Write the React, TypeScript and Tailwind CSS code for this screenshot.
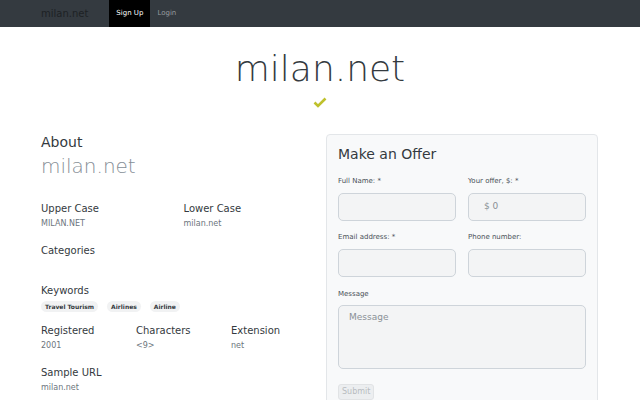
import React from "react";

const font = { fontFamily: '"DejaVu Sans", "Noto Sans", sans-serif' };

function Field({ label, placeholder }: { label: string; placeholder?: string }) {
  return (
    <div>
      <label className="mb-[7px] block text-[7px] leading-[10px] text-[#495057]">{label}</label>
      <div className="flex h-[28px] items-center rounded-[5px] border border-[#ced4da] bg-[#f3f4f5] px-[15px] text-[9px] text-[#8a9096]">
        {placeholder}
      </div>
    </div>
  );
}

function Fact({ title, value }: { title: string; value: string }) {
  return (
    <div>
      <h5 className="text-[10px] leading-[14px] text-[#343a40]">{title}</h5>
      <p className="mt-[3px] text-[8px] leading-[10px] text-[#6c757d]">{value}</p>
    </div>
  );
}

export default function App() {
  return (
    <div className="h-[400px] overflow-hidden bg-white" style={font}>
      <nav className="flex h-[27px] items-center bg-[#343a40] pl-[41px]">
        <span className="mr-[21px] text-[10px] text-[#1d2124]">milan.net</span>
        <a className="flex h-full items-center bg-black px-[7px] text-[7px] text-white">Sign Up</a>
        <a className="flex h-full items-center px-[7px] text-[7px] text-[#969b9f]">Login</a>
      </nav>

      <div className="pt-[19px] text-center">
        <h1 className="text-[36px] font-extralight leading-[46px] text-[#343a40]">milan.net</h1>
        <div className="mt-[5px] flex justify-center">
          <svg width="14" height="11" viewBox="0 0 14 11">
            <path d="M1.5 5.5 L5 9 L12.5 1.5" fill="none" stroke="#bfc12c" strokeWidth="2.6" />
          </svg>
        </div>
      </div>

      <div className="mt-[26px] flex pl-[41px] pr-[42px]">
        <div className="-mt-[1px] w-[285px]">
          <h3 className="text-[14px] leading-[18px] text-[#343a40]">About</h3>
          <h2 className="mt-[3px] text-[20px] font-extralight leading-[24px] text-[#868e96]">milan.net</h2>

          <div className="mt-[24px] grid grid-cols-2">
            <Fact title="Upper Case" value="MILAN.NET" />
            <Fact title="Lower Case" value="milan.net" />
          </div>

          <h5 className="mt-[15px] text-[10px] leading-[14px] text-[#343a40]">Categories</h5>

          <h5 className="mt-[26px] text-[10px] leading-[14px] text-[#343a40]">Keywords</h5>
          <div className="mt-[3px] flex gap-[9px]">
            {["Travel Tourism", "Airlines", "Airline"].map((k) => (
              <span
                key={k}
                className="flex h-[11px] items-center rounded-full bg-[#f1f2f3] px-[4px] text-[6px] font-bold text-[#343a40]"
              >
                {k}
              </span>
            ))}
          </div>

          <div className="mt-[12px] grid grid-cols-3">
            <Fact title="Registered" value="2001" />
            <Fact title="Characters" value="<9>" />
            <Fact title="Extension" value="net" />
          </div>

          <div className="mt-[15px]">
            <Fact title="Sample URL" value="milan.net" />
          </div>
        </div>

        <div className="h-[300px] flex-1 rounded-[4px] border border-[#e3e6e9] bg-[#f8f9fa] px-[11px] pt-[10px]">
          <h3 className="text-[14px] leading-[18px] text-[#343a40]">Make an Offer</h3>
          <div className="mt-[13px] grid grid-cols-2 gap-x-[12px] gap-y-[11px]">
            <Field label="Full Name: *" />
            <Field label="Your offer, $: *" placeholder="$ 0" />
            <Field label="Email address: *" />
            <Field label="Phone number:" />
          </div>
          <label className="mt-[12px] mb-[6px] block text-[7px] leading-[10px] text-[#495057]">Message</label>
          <div className="h-[64px] rounded-[5px] border border-[#ced4da] bg-[#f3f4f5] px-[10px] pt-[5px] text-[9px] text-[#8a9096]">
            Message
          </div>
          <button className="mt-[15px] rounded-[3px] border border-[#e1e3e5] bg-[#eceef0] px-[3px] py-[1px] text-[8px] text-[#b8bcc0]">
            Submit
          </button>
        </div>
      </div>
    </div>
  );
}
